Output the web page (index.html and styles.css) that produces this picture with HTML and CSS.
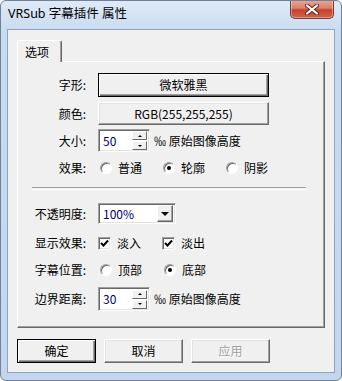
FILE: index.html
```html
<!DOCTYPE html>
<html lang="zh-CN">
<head>
  <meta charset="UTF-8">
  <title>VRSub 字幕插件 属性</title>
  <link rel="stylesheet" href="styles.css">
</head>
<body>
  <div class="window">
    <!-- Title bar -->
    <div class="titlebar">
      <span class="title">VRSub 字幕插件 属性</span>
      <div class="close-btn">
        <svg width="14" height="11" viewBox="0 0 14 11">
          <path d="M2 1.5 L12 9.5 M12 1.5 L2 9.5" stroke="#5a2318" stroke-width="4" stroke-linecap="round"/>
          <path d="M2 1.5 L12 9.5 M12 1.5 L2 9.5" stroke="#fff" stroke-width="2.2" stroke-linecap="round"/>
        </svg>
      </div>
    </div>

    <div class="client">
      <div class="tabs">
        <div class="tab">选项</div>
      </div>

      <div class="panel">
        <div class="row row-font">
          <span class="label">字形:</span>
          <div class="btn btn-default btn-wide">微软雅黑</div>
        </div>
        <div class="row row-color">
          <span class="label">颜色:</span>
          <div class="btn btn-wide">RGB(255,255,255)</div>
        </div>
        <div class="row row-size">
          <span class="label">大小:</span>
          <div class="spin">
            <span class="spin-val">50</span>
            <div class="spin-btns">
              <span class="spin-btn"><i class="arrow-up"></i></span>
              <span class="spin-btn"><i class="arrow-down"></i></span>
            </div>
          </div>
          <span class="unit">‰ 原始图像高度</span>
        </div>
        <div class="row row-effect">
          <span class="label">效果:</span>
          <span class="option"><span class="radio"></span>普通</span>
          <span class="option"><span class="radio checked"></span>轮廓</span>
          <span class="option"><span class="radio"></span>阴影</span>
        </div>

        <div class="separator"></div>

        <div class="row row-opacity">
          <span class="label">不透明度:</span>
          <div class="combo">
            <span class="combo-val">100%</span>
            <span class="combo-btn"><i class="arrow-down big"></i></span>
          </div>
        </div>
        <div class="row row-show">
          <span class="label">显示效果:</span>
          <span class="option"><span class="check"><svg width="9" height="9" viewBox="0 0 9 9"><path d="M1 4 L3.5 6.5 L8 1.5" stroke="#000" stroke-width="2" fill="none"/></svg></span>淡入</span>
          <span class="option"><span class="check"><svg width="9" height="9" viewBox="0 0 9 9"><path d="M1 4 L3.5 6.5 L8 1.5" stroke="#000" stroke-width="2" fill="none"/></svg></span>淡出</span>
        </div>
        <div class="row row-pos">
          <span class="label">字幕位置:</span>
          <span class="option"><span class="radio"></span>顶部</span>
          <span class="option"><span class="radio checked"></span>底部</span>
        </div>
        <div class="row row-margin">
          <span class="label">边界距离:</span>
          <div class="spin">
            <span class="spin-val">30</span>
            <div class="spin-btns">
              <span class="spin-btn"><i class="arrow-up"></i></span>
              <span class="spin-btn"><i class="arrow-down"></i></span>
            </div>
          </div>
          <span class="unit">‰ 原始图像高度</span>
        </div>
      </div>

      <!-- Dialog buttons -->
      <div class="actions">
        <div class="btn btn-default btn-action">确定</div>
        <div class="btn btn-action">取消</div>
        <div class="btn btn-action disabled">应用</div>
      </div>
    </div>
  </div>
</body>
</html>
```

FILE: styles.css
```css
body {
  margin: 0;
  font-family: "Noto Sans CJK SC", "Noto Sans", sans-serif;
  font-size: 12px;
  line-height: 16px;
  color: #000;
  background: #fff;
}

.window {
  box-sizing: border-box;
  width: 342px;
  height: 381px;
  border: 1px solid #6f8299;
  border-radius: 6px;
  background: linear-gradient(to bottom, #dfeaf7 0, #c9dbf0 30px, #c4d6ee 100%);
  display: flex;
  flex-direction: column;
  overflow: hidden;
}

.titlebar {
  height: 28px;
  display: flex;
  align-items: center;
  padding-left: 7px;
  position: relative;
}

.title {
  font-family: "Noto Sans", "Noto Sans CJK SC", sans-serif;
  font-size: 12.5px;
  padding-bottom: 2px;
}

.close-btn {
  position: absolute;
  top: -1px;
  right: 7px;
  width: 44px;
  height: 19px;
  box-sizing: border-box;
  border: 1px solid #7a3a30;
  border-top: none;
  border-radius: 0 0 5px 5px;
  background: linear-gradient(to bottom, #e9a796 0, #d9806c 45%, #c3432b 55%, #d2644a 100%);
  box-shadow: inset 0 0 0 1px rgba(255, 255, 255, 0.35);
  display: flex;
  align-items: center;
  justify-content: center;
}

.client {
  box-sizing: border-box;
  margin: 0 6px;
  height: 344px;
  border: 1px solid #8fa3bb;
  background: #f0f0f0;
  padding: 10px 0 0 9px;
}

/* Tabs */
.tabs {
  display: flex;
  height: 21px;
}

.tab {
  box-sizing: border-box;
  width: 45px;
  height: 22px;
  border-left: 1px solid #fff;
  border-top: 1px solid #fff;
  border-right: 1px solid #696969;
  box-shadow: inset -1px 0 #a0a0a0;
  border-radius: 2px 2px 0 0;
  background: #f0f0f0;
  padding: 3px 0 0 7px;
  position: relative;
  z-index: 1;
}

.panel {
  box-sizing: border-box;
  width: 308px;
  height: 267px;
  border-left: 1px solid #fff;
  border-top: 1px solid #fff;
  border-right: 1px solid #696969;
  border-bottom: 1px solid #696969;
  box-shadow: inset -1px -1px #a0a0a0;
  padding: 11px 0 0 14px;
}

.row {
  display: flex;
  align-items: center;
}

.label {
  width: 54px;
  margin-right: 12px;
  text-align: right;
  white-space: nowrap;
}

.row-font { height: 24px; }
.row-color { height: 23px; margin-top: 5px; }
.row-size { height: 23px; margin-top: 4px; }
.row-effect { height: 22px; margin-top: 5px; }
.row-opacity { height: 21px; margin-top: 13px; }
.row-show { height: 22px; margin-top: 8px; }
.row-pos { height: 22px; margin-top: 5px; }
.row-margin { height: 24px; margin-top: 6px; }

.separator {
  width: 274px;
  height: 1px;
  margin-top: 8px;
  border-top: 1px solid #a0a0a0;
  border-bottom: 1px solid #fff;
}

/* Buttons */
.btn {
  box-sizing: border-box;
  display: flex;
  align-items: center;
  justify-content: center;
  background: #f0f0f0;
  border: 1px solid;
  border-color: #fff #696969 #696969 #fff;
  box-shadow: inset -1px -1px #a0a0a0, inset 1px 1px #e3e3e3;
}

.btn-default {
  border: 1px solid #000;
  box-shadow: inset 1px 1px #fff, inset -1px -1px #696969, inset -2px -2px #a0a0a0;
}

.btn-wide {
  width: 171px;
  height: 100%;
}

.btn.disabled {
  color: #a0a0a0;
  text-shadow: 1px 1px #fff;
}

.actions {
  display: flex;
  gap: 8px;
  margin-top: 11px;
}

.btn-action {
  width: 79px;
  height: 24px;
}

/* Sunken fields */
.spin,
.combo {
  box-sizing: border-box;
  display: flex;
  align-items: center;
  background: #fff;
  border: 1px solid;
  border-color: #a0a0a0 #fff #fff #a0a0a0;
  box-shadow: inset 1px 1px #696969, inset -1px -1px #e3e3e3;
}

.spin {
  width: 52px;
  height: 100%;
  padding: 2px 2px 2px 4px;
}

.spin-val {
  flex: 1;
  color: #00007a;
}

.spin-btns {
  display: flex;
  flex-direction: column;
  gap: 1px;
}

.spin-btn {
  box-sizing: border-box;
  width: 15px;
  height: 9px;
  background: #f0f0f0;
  border: 1px solid;
  border-color: #fff #696969 #696969 #fff;
  display: flex;
  align-items: center;
  justify-content: center;
}

.arrow-up,
.arrow-down {
  width: 0;
  height: 0;
  border-left: 2px solid transparent;
  border-right: 2px solid transparent;
}

.arrow-up { border-bottom: 2px solid #000; }
.arrow-down { border-top: 2px solid #000; }

.arrow-down.big {
  border-left-width: 4px;
  border-right-width: 4px;
  border-top-width: 4px;
}

.unit {
  margin-left: 4px;
}

.combo {
  width: 78px;
  height: 21px;
  padding: 2px;
}

.combo-val {
  flex: 1;
  padding-left: 2px;
  color: #00007a;
}

.combo-btn {
  box-sizing: border-box;
  width: 16px;
  height: 17px;
  background: #f0f0f0;
  border: 1px solid;
  border-color: #fff #696969 #696969 #fff;
  box-shadow: inset -1px -1px #a0a0a0;
  display: flex;
  align-items: center;
  justify-content: center;
}

/* Radios and checkboxes */
.option {
  display: flex;
  align-items: center;
  width: 63px;
}

.row-effect .option:first-of-type,
.row-show .option,
.row-pos .option {
  width: 64px;
}

.radio {
  box-sizing: border-box;
  width: 12px;
  height: 12px;
  margin: 0 6px 0 2px;
  border-radius: 50%;
  border: 1px solid;
  border-color: #a0a0a0 #fff #fff #a0a0a0;
  background: #fff;
  box-shadow: inset 1px 1px #696969;
  position: relative;
}

.radio.checked::after {
  content: "";
  position: absolute;
  left: 3px;
  top: 3px;
  width: 4px;
  height: 4px;
  border-radius: 50%;
  background: #000;
}

.check {
  box-sizing: border-box;
  width: 13px;
  height: 13px;
  margin-right: 6px;
  border: 1px solid;
  border-color: #a0a0a0 #fff #fff #a0a0a0;
  background: #fff;
  box-shadow: inset 1px 1px #696969, inset -1px -1px #e3e3e3;
  display: flex;
  align-items: center;
  justify-content: center;
}
```
